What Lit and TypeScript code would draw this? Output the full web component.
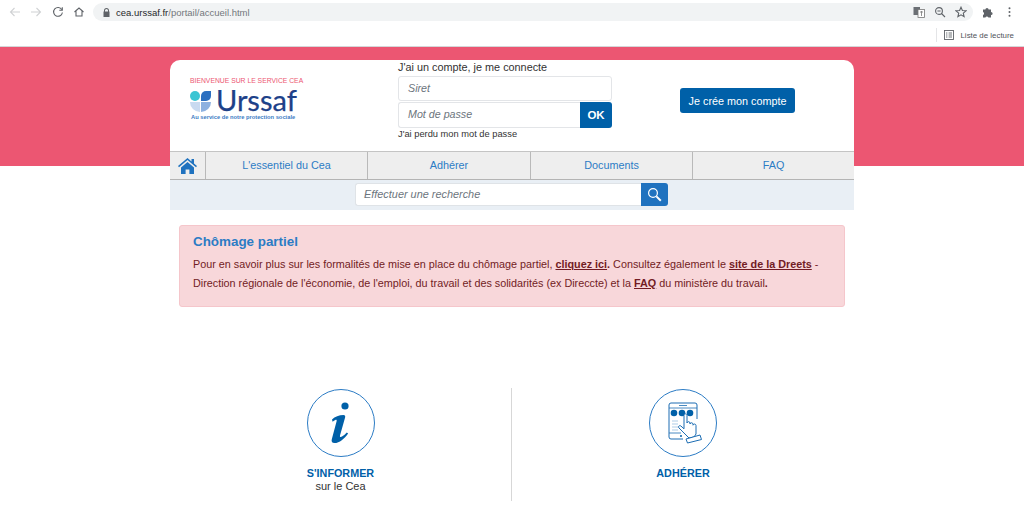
import { LitElement, html, css, svg } from "lit";
import { customElement } from "lit/decorators.js";

const dark = "#5f6368";

@customElement("app-root")
export class AppRoot extends LitElement {
  static styles = css`
    :host { display: block; width: 1024px; height: 511px; overflow: hidden; background: #fff; font-family: "Liberation Sans", Arial, sans-serif; color: #222; }
    svg { display: block; flex: none; }
    .chrome { height: 47px; box-sizing: border-box; border-bottom: 1px solid #d5d6d8; background: #fff; }
    .toolbar { height: 24px; display: flex; align-items: center; padding-left: 9px; }
    .navicons { display: flex; gap: 9.4px; width: 84px; }
    .omni { width: 880px; height: 18px; background: #f1f3f4; border-radius: 9px; display: flex; align-items: center; padding: 0 0 0 10px; box-sizing: border-box; font-size: 9.5px; color: #73777c; }
    .omni b { font-weight: 400; color: #26282b; }
    .url { margin-left: 6px; flex: 1; }
    .omni-right { display: flex; gap: 9px; padding-right: 6px; }
    .ext { display: flex; gap: 14px; margin-left: 9px; }
    .bookmarks { height: 22px; display: flex; justify-content: flex-end; align-items: center; padding-right: 10px; gap: 6px; font-size: 7.9px; color: #50545a; }
    .sep { width: 1px; height: 14px; background: #e4e5e7; margin-right: 1px; }

    .hero { background: linear-gradient(#ec5672 119px, #fff 119px); padding-top: 13px; }
    .wrap { width: 684px; margin: 0 auto; }
    .head { height: 91px; background: #fff; border-radius: 10px 10px 0 0; display: grid; grid-template-columns: 228px 214px auto; }
    .logo { padding: 17px 0 0 20px; }
    .welcome { font-size: 6.8px; line-height: 8px; color: #ec5672; white-space: nowrap; }
    .brand { display: flex; align-items: center; gap: 5px; height: 21px; margin-top: 6px; }
    .brand span { font-family: "Lato", sans-serif; font-size: 29px; line-height: 20px; margin-bottom: 4px; color: #1d4189; -webkit-text-stroke: 0.25px #1d4189; }
    .tag { font-size: 5.75px; font-weight: 700; line-height: 7px; color: #3b7cc4; margin: 2px 0 0 1px; white-space: nowrap; }
    .login { font-size: 10.85px; line-height: 15px; color: #333; margin: 0; }
    .login .t { height: 16px; line-height: 15px; white-space: nowrap; }
    .field { height: 25px; box-sizing: border-box; border: 1px solid #e3e5e8; border-radius: 3px; display: flex; align-items: center; padding: 0 0 1px 9px; font-style: italic; font-size: 10.7px; color: #6c757d; background: #fff; }
    .pass { display: flex; margin-top: 1px; height: 26px; }
    .pass .field { flex: 1; height: 26px; border-radius: 3px 0 0 3px; border-right: 0; }
    .ok { width: 32px; background: #0060a8; color: #fff; font-weight: 700; font-size: 11.5px; display: flex; align-items: center; justify-content: center; border-radius: 0 3px 3px 0; }
    .lost { font-size: 9.3px; line-height: 12px; color: #333; white-space: nowrap; }
    .cta { margin: 28px 0 0 68px; width: 115px; height: 25px; border-radius: 3px; background: #0060a8; color: #fff; font-size: 10.8px; display: flex; align-items: center; justify-content: center; white-space: nowrap; }

    .nav { height: 29px; box-sizing: border-box; border-top: 1px solid #c4c4c4; border-bottom: 1px solid #b4b4b4; background: #eee; display: grid; grid-template-columns: 35px 162px 163px 162px 162px; }
    .nav div { display: flex; align-items: center; justify-content: center; border-left: 1px solid #b9b9b9; color: #2c7cc5; font-size: 10.8px; padding-bottom: 1px; }
    .nav div:first-child { border-left: 0; padding: 0; }
    .search { height: 30px; background: #e9eff5; display: flex; justify-content: center; padding: 3px 1px 0 0; box-sizing: border-box; }
    .sinput { width: 286px; height: 23px; box-sizing: border-box; background: #fff; border: 1px solid #dfe3e7; border-right: 0; border-radius: 3px 0 0 3px; font-style: italic; font-size: 10.9px; color: #6c757d; display: flex; align-items: center; padding: 0 0 1px 8px; }
    .sbtn { width: 27px; height: 23px; background: #1f72bf; border-radius: 0 3px 3px 0; display: flex; align-items: center; justify-content: center; }

    .alert { width: 666px; height: 82px; box-sizing: border-box; margin: 15px auto 0; background: #f8d7da; border: 1px solid #f5c6cb; border-radius: 3px; padding: 7px 13px; color: #721c24; font-size: 10.8px; line-height: 19px; }
    .alert h2 { margin: 0 0 5px; font-size: 13.4px; line-height: 17px; font-weight: 700; color: #2c7cc5; }
    .alert p { margin: 0; white-space: nowrap; }
    .alert a { color: #721c24; font-weight: 700; text-decoration: underline; }
    .alert strong { font-weight: 700; }

    .cols { width: 684px; margin: 81px auto 0; display: grid; grid-template-columns: 341px 1px 342px; height: 113px; }
    .rule { background: #d7d7d7; }
    .col { display: flex; flex-direction: column; align-items: center; padding-top: 1px; }
    .circle { width: 68px; height: 68px; box-sizing: border-box; border: 1px solid #2c7cc5; border-radius: 50%; display: flex; align-items: center; justify-content: center; }
    .col b { margin-top: 10px; font-size: 10.8px; line-height: 13px; color: #0060a8; }
    .col span { font-size: 11px; line-height: 13px; color: #333; }
  `;

  private tool(d: unknown) {
    return html`<svg width="12" height="12" viewBox="0 0 12 12" fill="none" stroke=${dark} stroke-width="1.1">${d}</svg>`;
  }

  render() {
    return html`
      <div class="chrome">
        <div class="toolbar">
          <div class="navicons">
            <svg width="12" height="12" viewBox="0 0 12 12" fill="none" stroke="#d0d2d4" stroke-width="1.1"><path d="M11 6H1.500M5.500 2 1.500 6l4 4"/></svg>
            <svg width="12" height="12" viewBox="0 0 12 12" fill="none" stroke="#d0d2d4" stroke-width="1.1"><path d="M1 6h9.500M6.500 2l4 4-4 4"/></svg>
            ${this.tool(svg`<path d="M9.800 3.600A4.400 4.400 0 1 0 10.400 6.500"/><path d="M10.300 1.200v3H7.300" />`)}
            ${this.tool(svg`<path d="M1.500 6 6 2l4.500 4M3 5.200V10h6V5.200"/>`)}
          </div>
          <div class="omni">
            <svg width="7" height="9" viewBox="0 0 7 9"><path fill="${dark}" d="M1 3.600V2.500a2.500 2.500 0 0 1 5 0v1.100h.5V9H.5V3.600zM2 3.600h3V2.500a1.500 1.500 0 0 0-3 0z"/></svg>
            <div class="url"><b>cea.urssaf.fr</b>/portail/accueil.html</div>
            <div class="omni-right">
              <svg width="12" height="12" viewBox="0 0 12 12"><rect x="0.5" y="1" width="6.500" height="8" fill="#6b6f74"/><rect x="5" y="3.500" width="6.500" height="8" fill="#fff" stroke="#777" stroke-width=".8"/><path d="M7 6h3M8.500 5v5" stroke="#777" stroke-width=".8"/></svg>
              ${this.tool(svg`<circle cx="5" cy="5" r="3.400"/><path d="M7.500 7.500 11 11M3.400 5h3.200"/>`)}
              ${this.tool(svg`<path d="M6 1.200 7.400 4.500l3.600.3-2.700 2.400.8 3.500L6 8.800l-3.100 1.900.8-3.500L1 4.800l3.600-.3z"/>`)}
            </div>
          </div>
          <div class="ext">
            <svg width="12" height="12" viewBox="0 0 12 12"><path fill="${dark}" d="M1 3.500h2.400a1.600 1.600 0 0 1 3.200 0H9v2.400a1.600 1.600 0 0 1 0 3.200V11.500H6.400a1.600 1.600 0 0 0-3 0H1V9a1.600 1.600 0 0 0 0-3z"/></svg>
            <svg width="3" height="12" viewBox="0 0 3 12"><g fill="${dark}"><circle cx="1.500" cy="2.200" r="1"/><circle cx="1.500" cy="6" r="1"/><circle cx="1.500" cy="9.800" r="1"/></g></svg>
          </div>
        </div>
        <div class="bookmarks">
          <i class="sep"></i>
          <svg width="10" height="10" viewBox="0 0 10 10" fill="none" stroke="${dark}" stroke-width=".9"><rect x=".5" y=".5" width="9" height="9"/><path d="M2 3h1.400M2 5h1.400M2 7h1.400M4.600 3H8M4.600 5H8M4.600 7H8"/></svg>
          <span>Liste de lecture</span>
        </div>
      </div>

      <div class="hero">
        <div class="wrap">
          <div class="head">
            <div class="logo">
              <div class="welcome">BIENVENUE SUR LE SERVICE CEA</div>
              <div class="brand">
                <svg width="21" height="21" viewBox="0 0 21 21">
                  <circle cx="5" cy="5" r="5" fill="#3cc5d3"/>
                  <path d="M11 10V5a5 5 0 0 1 5-5h5v5a5 5 0 0 1-5 5z" fill="#2b6fc0"/>
                  <path d="M0 11h10v10A10 10 0 0 1 0 11z" fill="#c9daf0"/>
                  <path d="M11 11h10A10 10 0 0 1 11 21z" fill="#8eb1e0"/>
                </svg>
                <span>Urssaf</span>
              </div>
              <div class="tag">Au service de notre protection sociale</div>
            </div>
            <div class="login">
              <div class="t">J'ai un compte, je me connecte</div>
              <div class="field">Siret</div>
              <div class="pass"><div class="field">Mot de passe</div><div class="ok">OK</div></div>
              <div class="lost">J'ai perdu mon mot de passe</div>
            </div>
            <div class="cta">Je crée mon compte</div>
          </div>
          <div class="nav">
            <div>
              <svg width="19" height="16" viewBox="0 0 19 16"><path fill="#1f72bf" d="M9.500 0 0 8l1 1.200L9.500 2 18 9.200 19 8l-3-2.500V1h-2.500v2.400zM3 9.600V16h4.600v-4.600h3.800V16H16V9.600L9.500 4z"/></svg>
            </div>
            <div>L'essentiel du Cea</div>
            <div>Adhérer</div>
            <div>Documents</div>
            <div>FAQ</div>
          </div>
          <div class="search">
            <div class="sinput">Effectuer une recherche</div>
            <div class="sbtn">
              <svg width="15" height="15" viewBox="0 0 15 15" fill="none" stroke="#fff"><circle cx="6" cy="6" r="4.400" stroke-width="1.200"/><path d="m9.400 9.400 4.400 4.400" stroke-width="2"/></svg>
            </div>
          </div>
        </div>
      </div>

      <div class="alert">
        <h2>Chômage partiel</h2>
        <p>Pour en savoir plus sur les formalités de mise en place du chômage partiel, <a>cliquez ici</a><strong>.</strong> Consultez également le <a>site de la Dreets</a> -</p>
        <p>Direction régionale de l'économie, de l'emploi, du travail et des solidarités (ex Direccte) et la <a>FAQ</a> du ministère du travail<strong>.</strong></p>
      </div>

      <div class="cols">
        <div class="col">
          <div class="circle">
            <svg width="24" height="42" viewBox="0 0 24 42"><circle cx="16" cy="4" r="3.600" fill="#0060a8"/><path fill="#0060a8" d="M3 17.500c3-3 7-4.500 11.500-4.500 1.500 0 2 1 1.600 2.600L11 33.500c-.4 1.600.8 1.900 2 1.100 1.800-1.100 3.400-2.600 4.800-4.200l1.300 1C15.400 36.500 10.500 41 5.500 41c-2.500 0-3.300-1.600-2.700-3.800l4.800-18c.3-1.200-.3-1.700-1.300-1.200-.9.500-1.800 1.100-2.700 1.700z"/></svg>
          </div>
          <b>S'INFORMER</b>
          <span>sur le Cea</span>
        </div>
        <div class="rule"></div>
        <div class="col">
          <div class="circle">
            <svg width="44" height="44" viewBox="0 0 44 44" fill="none" stroke="#1c6db3" stroke-width="1">
              <path d="M22 38H10a2 2 0 0 1-2-2V4a2 2 0 0 1 2-2h24a2 2 0 0 1 2 2v14"/>
              <path d="M8 7h28M8 32h12M18 4.500h8" stroke-width=".8"/>
              <g fill="#0060a8" stroke="none"><circle cx="13" cy="12" r="3.300"/><circle cx="21" cy="12" r="3.300"/><circle cx="29" cy="12" r="3.300"/><circle cx="20" cy="35" r="1"/></g>
              <path d="M11 20h6M11 23h6M11 26h6M11 29h6" stroke-width=".7" stroke="#8db8dc"/>
              <path fill="#fff" d="M28 37 18 27c-1.500-1.500.6-3.200 2-1.900l3 2.700V14.500c0-2.200 3-2.200 3 0V22c.2-1.800 3-1.800 3 0v1c.3-1.800 3-1.600 3 .2v1c.3-1.700 3-1.500 3 .3V33l-2 3z"/>
              <path fill="#fff" d="m25 38 14-4 1.500 4.500-14 3.500z"/>
            </svg>
          </div>
          <b>ADHÉRER</b>
        </div>
      </div>
    `;
  }
}
